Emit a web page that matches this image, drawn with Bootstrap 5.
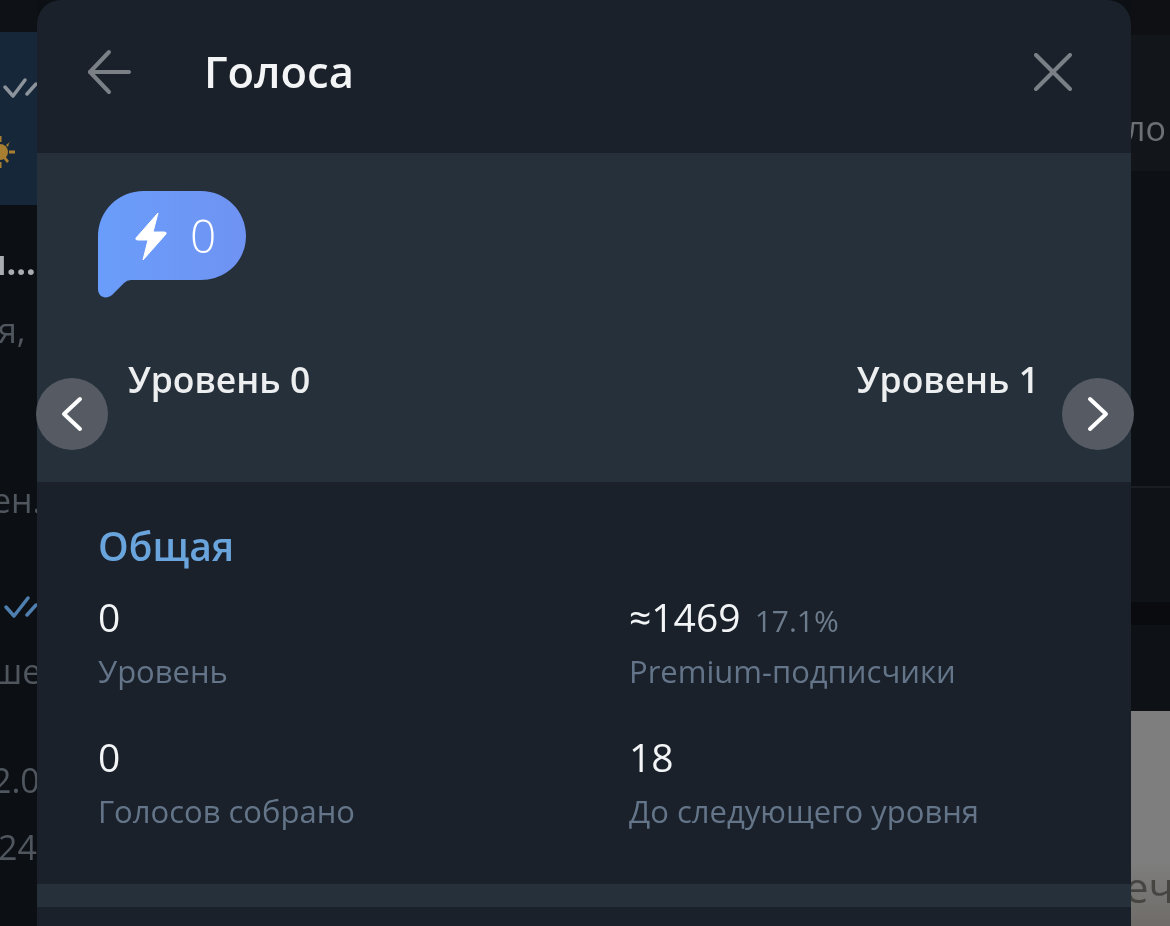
<!DOCTYPE html>
<html lang="ru">
<head>
    <meta charset="UTF-8">
    <meta name="viewport" content="width=device-width, initial-scale=1.0">
    <title>Голоса</title>
    <link href="https://cdn.jsdelivr.net/npm/bootstrap@5.3.0/dist/css/bootstrap.min.css" rel="stylesheet">
    <style>
        html, body {
            height: 926px;
            overflow: hidden;
        }
        body {
            background-color: #0c0f14;
            font-family: "Open Sans", "Noto Sans", sans-serif;
            color: #f1f3f5;
        }
        .stage {
            position: relative;
            height: 926px;
            filter: blur(.5px);
        }
        /* куски чата за окном */
        .side-left {
            width: 37px;
            flex-shrink: 0;
            overflow: hidden;
            color: #4f565e;
            font-size: 34px;
            line-height: 40px;
            white-space: nowrap;
        }
        .side-right {
            width: 39px;
            flex-shrink: 0;
            overflow: hidden;
            color: #6c7075;
            font-size: 34px;
            line-height: 40px;
            white-space: nowrap;
        }
        .left-top { height: 32px; background-color: #0e1116; }
        .left-blue {
            height: 173px;
            background-color: #16273a;
            padding-top: 38px;
        }
        .left-blue svg { display: block; }
        .left-blue .sun { margin-top: 30px; margin-left: -17px; }
        .left-chat { padding-top: 37px; }
        .left-chat .bright { color: #a9acb0; font-weight: 700; }
        .left-chat .row-a { height: 68px; }
        .left-chat .row-b { height: 170px; }
        .left-chat .row-en { height: 103px; }
        .left-chat .row-c { height: 68px; }
        .left-chat .row-d { height: 109px; }
        .left-chat .row-e { height: 67px; }
        .left-chat .nudge { margin-left: -8px; }
        .left-chat .nudge-less { margin-left: -2px; }
        .left-chat .nudge-more { margin-left: -16px; }
        .right-top { height: 35px; background-color: #0e1013; }
        .right-head {
            height: 136px;
            background-color: #121519;
            padding-top: 73px;
            text-indent: -5px;
        }
        .right-a { height: 317px; background-color: #0d1015; border-bottom: 2px solid #1b1e23; }
        .right-b { height: 114px; background-color: #0f1217; }
        .right-c { height: 23px; background-color: #090b0e; }
        .right-d { height: 86px; background-color: #0e1116; }
        .right-pic {
            height: 215px;
            background: linear-gradient(#7e7e7e 70%, #6f6c68);
            color: #474542;
            padding-top: 156px;
            font-size: 42px;
            text-indent: -6px;
        }

        .panel {
            width: 1094px;
            flex-shrink: 0;
            background-color: #1a212a;
            border-radius: 24px 24px 0 0;
            overflow: hidden;
        }
        .panel-head {
            height: 153px;
            padding: 0 59px 10px 50px;
        }
        .panel-title {
            font-size: 43.5px;
            font-weight: 600;
            line-height: 1;
            margin-left: 73px;
            color: #f3f4f5;
        }
        .level-box {
            height: 329px;
            background-color: #26303b;
            padding: 38px 62px 0 61px;
        }
        .boost-bubble { display: block; }
        .level-names {
            margin-top: 60px;
            padding: 0 30px 0 30px;
            font-size: 35.500px;
            font-weight: 600;
            line-height: 42px;
            color: #eceef0;
        }
        .stats-box {
            height: 402px;
            padding: 41px 62px 0 61px;
        }
        .stats-title {
            font-size: 39px;
            font-weight: 600;
            line-height: 46px;
            color: #6aa4dc;
        }
        .stat-grid {
            display: grid;
            grid-template-columns: 531px 1fr;
            row-gap: 42px;
            margin-top: 23px;
        }
        .stat-num {
            font-size: 39px;
            line-height: 50px;
            height: 50px;
            color: #f2f4f6;
        }
        .stat-pct {
            font-size: 30px;
            line-height: 1;
            color: #6d7c8d;
            margin-left: 4px;
        }
        .stat-label {
            font-size: 31px;
            line-height: 38px;
            margin-top: 10px;
            color: #64758a;
        }
        .divider-band {
            height: 23px;
            background-color: #26303b;
        }
        .nav-round {
            position: absolute;
            top: 378px;
            width: 72px;
            height: 72px;
            border-radius: 50%;
            background-color: #555a63;
        }
        .nav-prev { left: 36px; }
        .nav-next { left: 1062px; }
    </style>
</head>
<body>
<div class="stage d-flex">
    <div class="side-left">
        <div class="left-top"></div>
        <div class="left-blue">
            <svg width="37" height="34" viewBox="0 0 37 34" fill="none" stroke="#8c939b" stroke-width="3.500" stroke-linecap="round" stroke-linejoin="round"><path d="M5 17l8 9L25 10"/><path d="M27 24l9-10"/></svg>
            <svg class="sun" width="32" height="36" viewBox="0 0 32 36" fill="#a87f30"><circle cx="17" cy="18" r="8"/><path d="M15.500 2h3v6h-3zM15.500 28h3v6h-3zM2 16.500h6v3H2zM26 16.500h6v3h-6z"/><path d="M6 7l2-2 4 5-2 2zM24 29l2-2-4-5-2 2zM6 29l-2-2 5-4 2 2zM26 9l2-2-5 4 2 2z"/></svg>
        </div>
        <div class="left-chat">
            <div class="row-a bright nudge-more">н...</div>
            <div class="row-b nudge-less">я,</div>
            <div class="row-en nudge">ен.</div>
            <div class="row-c"><svg width="37" height="30" viewBox="0 0 37 30" fill="none" stroke="#4f7fae" stroke-width="3.500" stroke-linecap="round" stroke-linejoin="round"><path d="M6 15l8 9L28 6"/><path d="M27 23l9-10"/></svg></div>
            <div class="row-d nudge">ше</div>
            <div class="row-e nudge">2.0</div>
            <div class="row-e nudge-less">24</div>
        </div>
    </div>

    <div class="panel">
        <div class="panel-head d-flex align-items-center">
            <svg width="44" height="46" viewBox="0 0 44 46" fill="none" stroke="#7b8086" stroke-width="4" stroke-linecap="round" stroke-linejoin="round"><path d="M42 23H3"/><path d="M22 3L3 23l19 20"/></svg>
            <div class="panel-title">Голоса</div>
            <svg class="ms-auto" width="38" height="38" viewBox="0 0 38 38" fill="none" stroke="#7b8086" stroke-width="4" stroke-linecap="round"><path d="M2 2l34 34"/><path d="M36 2L2 36"/></svg>
        </div>
        <div class="level-box">
            <svg class="boost-bubble" width="149" height="107" viewBox="0 0 149 107">
                <defs>
                    <linearGradient id="boostFill" x1="0" y1="0" x2="1" y2="0">
                        <stop offset="0" stop-color="#6a9dfb"/>
                        <stop offset="1" stop-color="#6f93f2"/>
                    </linearGradient>
                </defs>
                <path d="M46 0H103C128 0 148 20 148 45C148 70 128 89 103 89H33Q29 89 26 92L14 104C8 109 0 106 0 98V46C0 20 20 0 46 0Z" fill="url(#boostFill)"/>
                <path d="M60 22L38 47Q37 49 40 49L50 49L45 69L68 43Q69 41 66 41L55 41Z" fill="#fff" stroke="#fff" stroke-linejoin="round" stroke-width="1"/>
                <text x="92" y="62" font-family="Open Sans" font-size="46" font-weight="300" fill="#fff">0</text>
            </svg>
            <div class="level-names d-flex justify-content-between">
                <span>Уровень 0</span>
                <span>Уровень 1</span>
            </div>
        </div>
        <div class="stats-box">
            <div class="stats-title">Общая</div>
            <div class="stat-grid">
                <div>
                    <div class="stat-num">0</div>
                    <div class="stat-label">Уровень</div>
                </div>
                <div>
                    <div class="stat-num">≈1469 <span class="stat-pct">17.1%</span></div>
                    <div class="stat-label">Premium-подписчики</div>
                </div>
                <div>
                    <div class="stat-num">0</div>
                    <div class="stat-label">Голосов собрано</div>
                </div>
                <div>
                    <div class="stat-num">18</div>
                    <div class="stat-label">До следующего уровня</div>
                </div>
            </div>
        </div>
        <div class="divider-band"></div>
    </div>

    <div class="side-right">
        <div class="right-top"></div>
        <div class="right-head">ло</div>
        <div class="right-a"></div>
        <div class="right-b"></div>
        <div class="right-c"></div>
        <div class="right-d"></div>
        <div class="right-pic">еч</div>
    </div>

    <div class="nav-round nav-prev d-flex align-items-center justify-content-center">
        <svg width="22" height="36" viewBox="0 0 22 36" fill="none" stroke="#fff" stroke-width="4" stroke-linecap="round" stroke-linejoin="round"><path d="M19 3L3 18l16 15"/></svg>
    </div>
    <div class="nav-round nav-next d-flex align-items-center justify-content-center">
        <svg width="22" height="36" viewBox="0 0 22 36" fill="none" stroke="#fff" stroke-width="4" stroke-linecap="round" stroke-linejoin="round"><path d="M3 3l16 15L3 33"/></svg>
    </div>
</div>
<script src="https://cdn.jsdelivr.net/npm/bootstrap@5.3.0/dist/js/bootstrap.bundle.min.js"></script>
</body>
</html>
